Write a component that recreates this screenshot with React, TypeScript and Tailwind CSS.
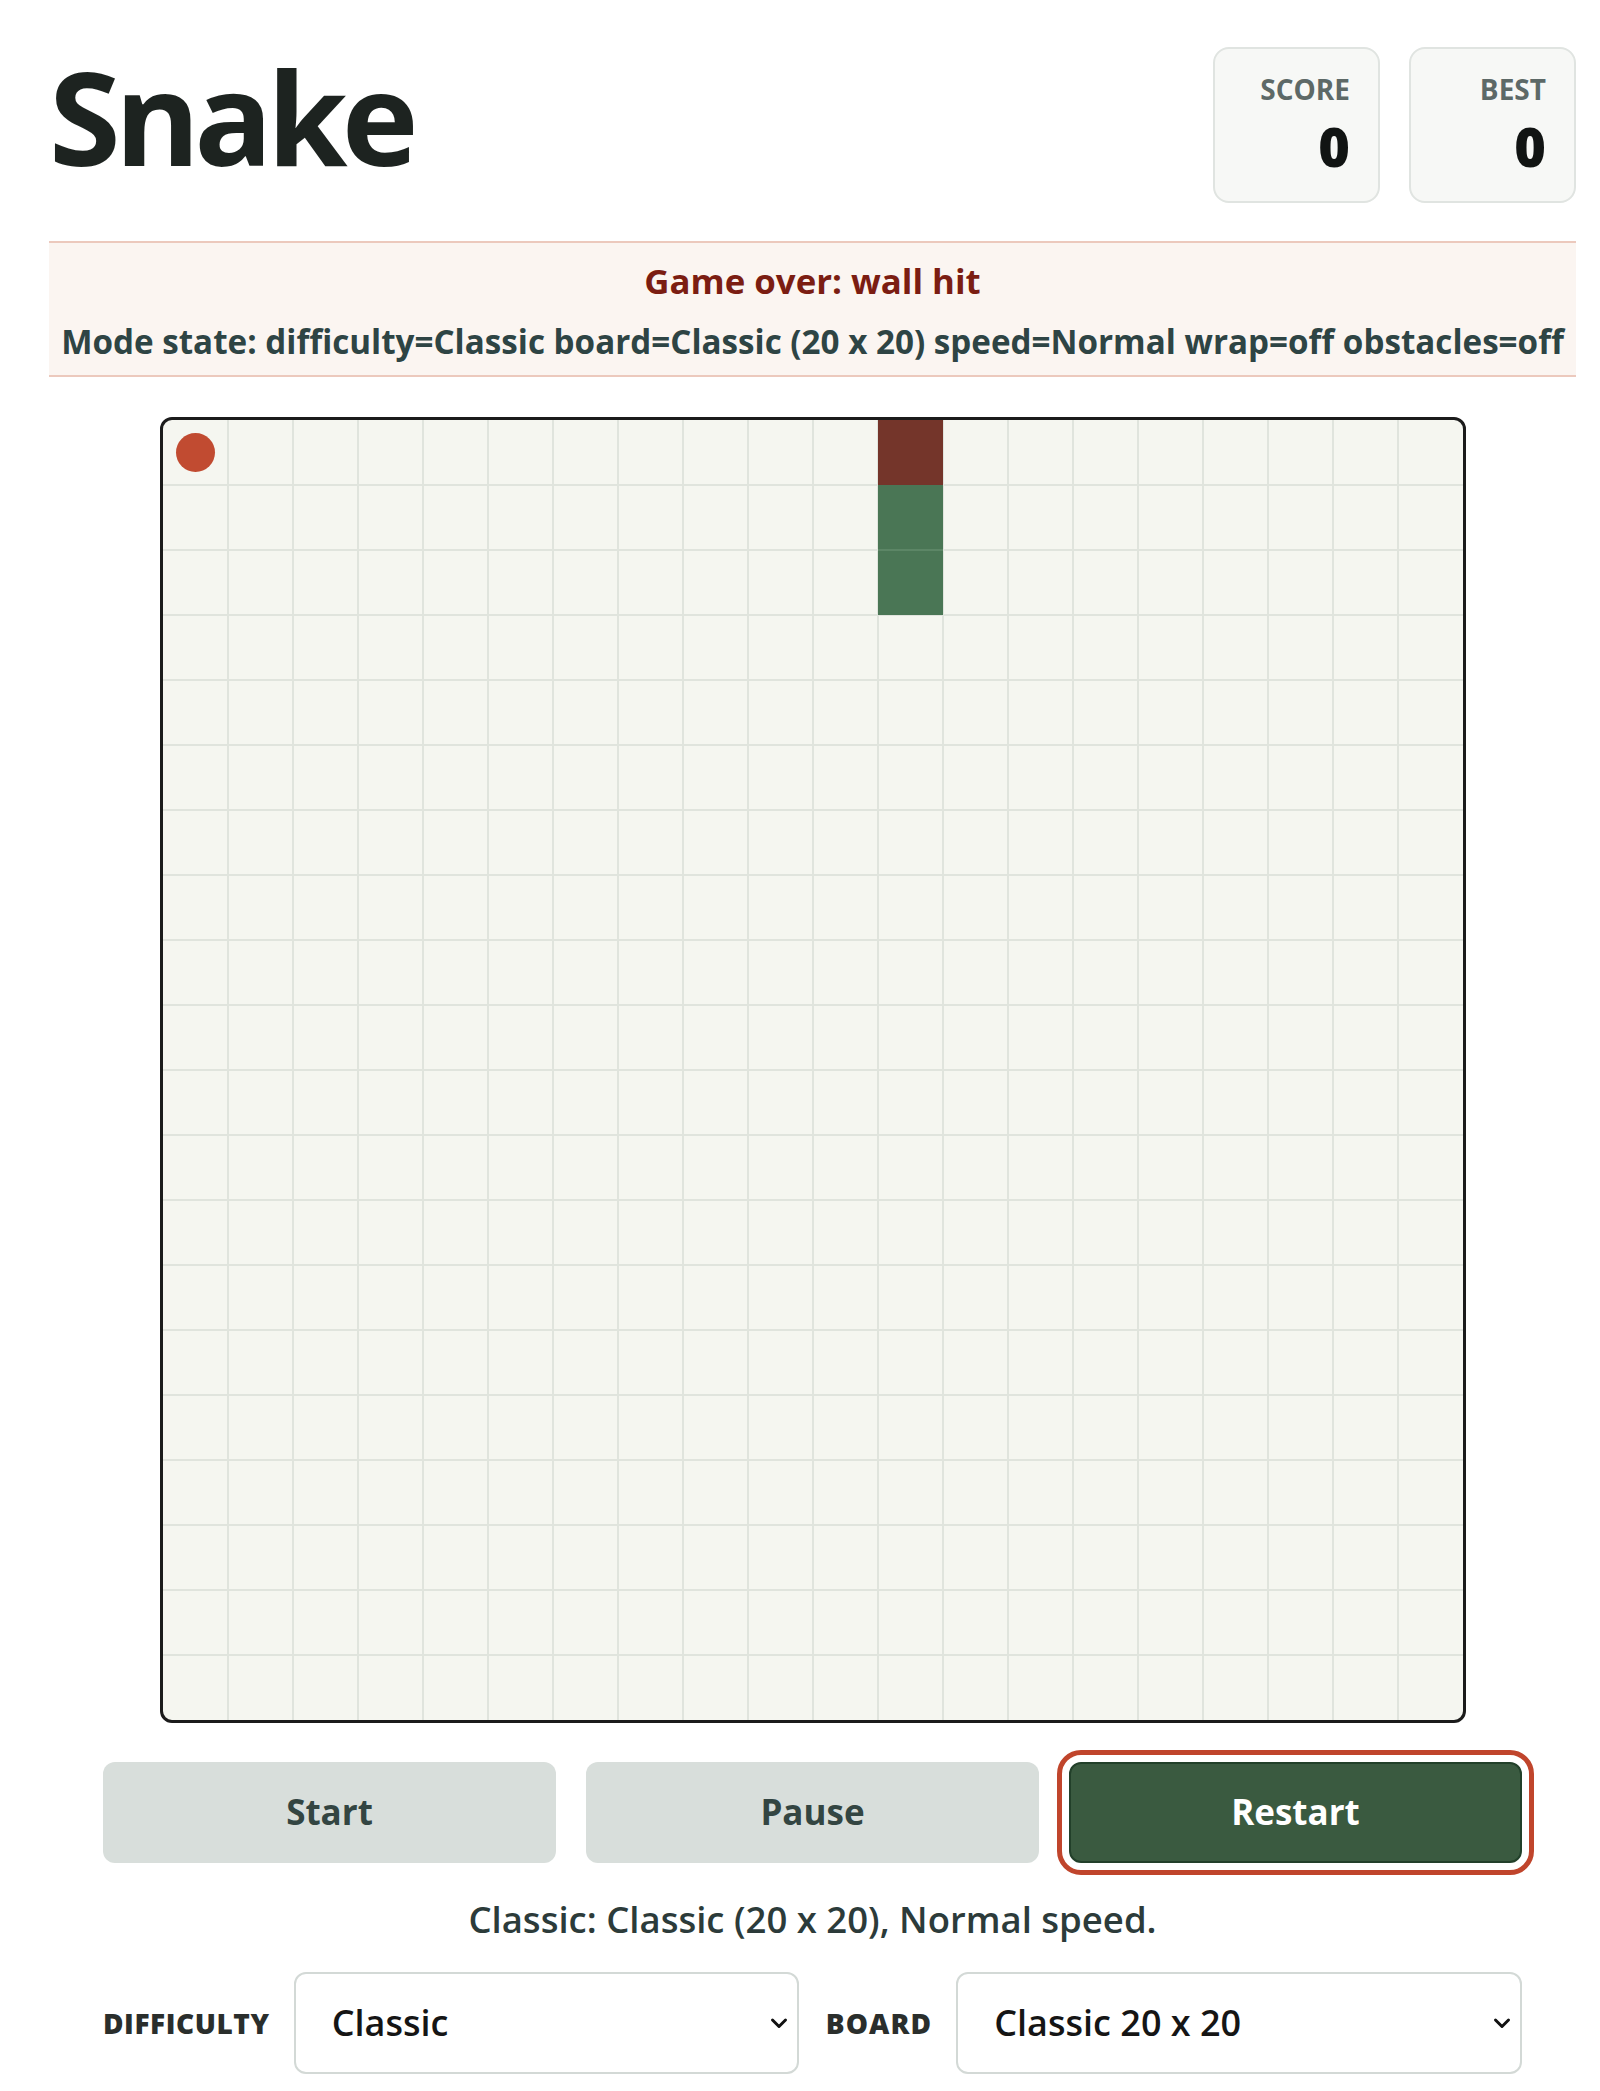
import { useState } from "react";

const CELLS = 20;
const CELL = 65;

type Cell = { x: number; y: number };

function Board({ snake, food }: { snake: Cell[]; food: Cell }) {
  const size = CELLS * CELL;
  const lines = Array.from({ length: CELLS - 1 }, (_, i) => (i + 1) * CELL);

  return (
    <div className="mx-auto w-[1306px] h-[1306px] rounded-[12px] border-[3px] border-[#1b1b1b] bg-[#f5f6f0] overflow-hidden">
      <svg width={size} height={size} viewBox={`0 0 ${size} ${size}`} className="block">
        {/* grid */}
        {lines.map((p) => (
          <g key={p}>
            <rect x={p - 1} y={0} width={2} height={size} fill="#e0e4dd" />
            <rect x={0} y={p - 1} width={size} height={2} fill="#e0e4dd" />
          </g>
        ))}

        {/* snake: head first */}
        {snake.map((c, i) => (
          <rect
            key={i}
            x={c.x * CELL}
            y={c.y * CELL}
            width={CELL}
            height={CELL}
            fill={i === 0 ? "#74352a" : "#4a7655"}
          />
        ))}
        {snake.slice(1, -1).map((c, i) => (
          <rect
            key={`seam-${i}`}
            x={c.x * CELL}
            y={(c.y + 1) * CELL - 1}
            width={CELL}
            height={2}
            fill="#5c8666"
          />
        ))}

        {/* food */}
        <circle cx={food.x * CELL + CELL / 2} cy={food.y * CELL + CELL / 2} r={19.5} fill="#c14b31" />
      </svg>
    </div>
  );
}

function ScoreBox({ label, value }: { label: string; value: number }) {
  return (
    <div className="w-[167px] h-[156px] rounded-[16px] border-2 border-[#e0e4e1] bg-[#f7f8f6] flex flex-col items-end pr-[28px] pt-[26px]">
      <div className="text-[28px] leading-none font-bold text-[#5d6967] uppercase">{label}</div>
      <div className="mt-[16px] text-[54px] leading-none font-extrabold text-[#111413]">{value}</div>
    </div>
  );
}

function Chevron() {
  return (
    <svg
      width="18"
      height="11"
      viewBox="0 0 18 11"
      className="pointer-events-none absolute right-[11px] top-1/2 -translate-y-1/2"
    >
      <path d="M2.5 2.5l6.5 6.5 6.5-6.5" fill="none" stroke="#111" strokeWidth="3" strokeLinecap="round" strokeLinejoin="round" />
    </svg>
  );
}

export default function App() {
  const [difficulty, setDifficulty] = useState("classic");
  const [board, setBoard] = useState("classic-20");

  const snake: Cell[] = [
    { x: 11, y: 0 },
    { x: 11, y: 1 },
    { x: 11, y: 2 },
  ];
  const food: Cell = { x: 0, y: 0 };

  return (
    <div className="min-h-screen bg-white font-['Open_Sans','Noto_Sans',sans-serif]">
      <div className="ml-[49px] w-[1527px] pt-[47px]">
        {/* header */}
        <div className="flex items-start justify-between">
          <h1 className="mt-[4px] text-[130px] leading-none font-bold tracking-[-0.045em] text-[#1d2320]">Snake</h1>
          <div className="flex gap-[29px]">
            <ScoreBox label="Score" value={0} />
            <ScoreBox label="Best" value={0} />
          </div>
        </div>

        {/* status */}
        <div className="mt-[38px] border-y-2 border-[#ecc9bd] bg-[#fbf5f1] pt-[15px] pb-[10px] text-center">
          <div className="text-[34.8px] leading-[46px] font-bold text-[#7b1d12]">Game over: wall hit</div>
          <div className="mt-[15px] text-[33.2px] leading-[46px] font-bold text-[#2e4444]">
            Mode state: difficulty=Classic board=Classic (20 x 20) speed=Normal wrap=off obstacles=off
          </div>
        </div>

        {/* board */}
        <div className="mt-[40px]">
          <Board snake={snake} food={food} />
        </div>

        {/* controls */}
        <div className="mx-auto mt-[39px] grid w-[1419px] grid-cols-3 gap-[30px]">
          <button className="h-[101px] rounded-[12px] bg-[#d8dedb] text-[35px] font-bold text-[#334542]">Start</button>
          <button className="h-[101px] rounded-[12px] bg-[#d8dedb] text-[35px] font-bold text-[#334542]">Pause</button>
          <button className="h-[101px] rounded-[12px] border-2 border-[#22402a] bg-[#3a5a40] text-[35px] font-bold text-white outline-[5px] outline-solid outline-[#c0452c] outline-offset-[7px]">
            Restart
          </button>
        </div>

        <p className="mt-[38px] text-center text-[36.5px] leading-none font-semibold text-[#2c3b3a]">
          Classic: Classic (20 x 20), Normal speed.
        </p>

        {/* selects */}
        <div className="mx-auto mt-[34px] flex w-[1419px] items-center gap-[24px]">
          <label className="text-[28px] font-extrabold uppercase tracking-[0.02em] text-[#2a2e2c]">Difficulty</label>
          <div className="relative w-[505px]">
            <select
              value={difficulty}
              onChange={(e) => setDifficulty(e.target.value)}
              className="h-[102px] w-full appearance-none rounded-[12px] border-2 border-[#d3d9d6] bg-white pl-[36px] text-[36px] font-semibold text-[#151515]"
            >
              <option value="classic">Classic</option>
              <option value="relaxed">Relaxed</option>
              <option value="hard">Hard</option>
            </select>
            <Chevron />
          </div>
          <label className="ml-[3px] text-[28px] font-extrabold uppercase tracking-[0.04em] text-[#2a2e2c]">Board</label>
          <div className="relative flex-1">
            <select
              value={board}
              onChange={(e) => setBoard(e.target.value)}
              className="h-[102px] w-full appearance-none rounded-[12px] border-2 border-[#d3d9d6] bg-white pl-[36px] text-[36px] font-semibold text-[#151515]"
            >
              <option value="classic-20">Classic 20 x 20</option>
              <option value="small-15">Small 15 x 15</option>
              <option value="large-30">Large 30 x 30</option>
            </select>
            <Chevron />
          </div>
        </div>
      </div>
    </div>
  );
}
